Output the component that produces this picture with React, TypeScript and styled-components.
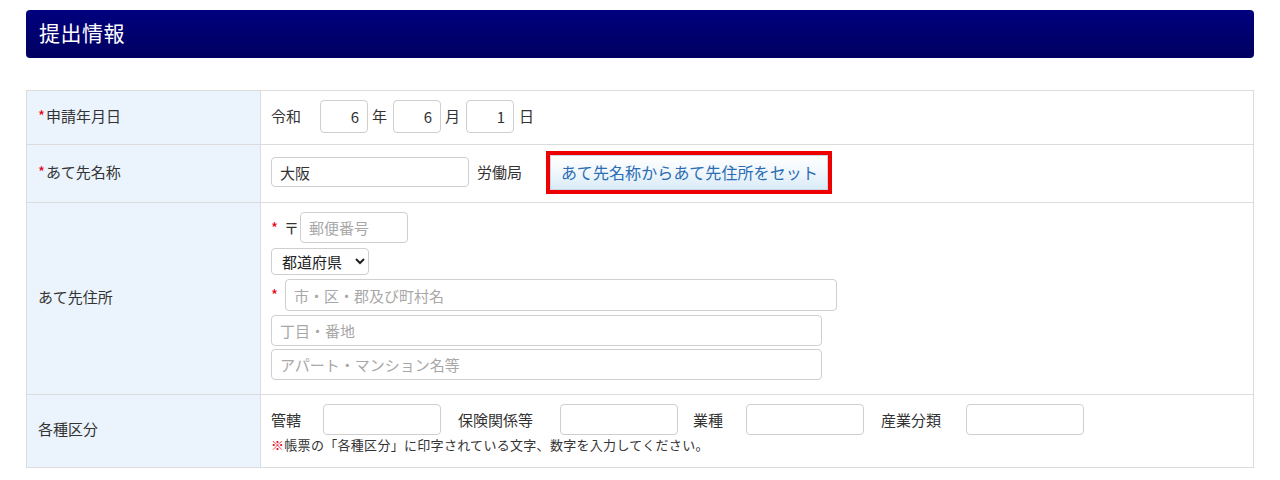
import React from "react";
import styled, { createGlobalStyle } from "styled-components";

const GlobalStyle = createGlobalStyle`
    body {
        margin: 0;
        background: #fff;
        font-family: "Noto Sans CJK JP", "Noto Sans", sans-serif;
        color: #333;
        line-height: 1.3;
    }
`;

const Page = styled.div`
    padding: 10px 26px 0;
`;

const Header = styled.div`
    height: 48px;
    border-radius: 4px;
    background: linear-gradient(to bottom, #00007e, #000060);
    display: flex;
    align-items: center;
    padding-left: 13px;
`;

const Title = styled.h2`
    margin: 0 0 2px;
    color: #fff;
    font-size: 21px;
    font-weight: 400;
    letter-spacing: 0.5px;
`;

const Table = styled.div`
    margin-top: 32px;
    display: grid;
    grid-template-columns: 234px 1fr;
    border: 1px solid #dcdcdc;
    border-bottom: none;
`;

const Label = styled.div<{ $h: number }>`
    height: ${p => p.$h}px;
    box-sizing: border-box;
    background: #ebf4fd;
    border-right: 1px solid #dcdcdc;
    border-bottom: 1px solid #dcdcdc;
    display: flex;
    align-items: center;
    padding: 0 0 4px 11px;
    font-size: 15px;
`;

const Cell = styled.div<{ $h: number; $top?: number }>`
    height: ${p => p.$h}px;
    box-sizing: border-box;
    border-bottom: 1px solid #dcdcdc;
    padding: ${p => (p.$top !== undefined ? `${p.$top}px 0 0 10px` : "0 0 3px 10px")};
    display: flex;
    flex-direction: column;
    justify-content: ${p => (p.$top !== undefined ? "flex-start" : "center")};
    font-size: 15px;
`;

const Row = styled.div<{ $gap?: number; $mt?: number }>`
    display: flex;
    align-items: center;
    gap: ${p => p.$gap ?? 4}px;
    margin-top: ${p => p.$mt ?? 0}px;
`;

const Req = styled.span`
    color: #e60012;
    margin-right: 1px;
`;

const Text = styled.span<{ $ml?: number; $mr?: number }>`
    margin-left: ${p => p.$ml ?? 0}px;
    margin-right: ${p => p.$mr ?? 0}px;
    white-space: nowrap;
`;

const Input = styled.input<{ $w: number; $h?: number; $right?: boolean }>`
    width: ${p => p.$w}px;
    height: ${p => p.$h ?? 31}px;
    box-sizing: border-box;
    border: 1px solid #cfcfcf;
    border-radius: 4px;
    padding: 0 8px;
    font-family: inherit;
    font-size: 15px;
    color: #333;
    text-align: ${p => (p.$right ? "right" : "left")};
    background: #fff;
    &::placeholder {
        color: #a8a8a8;
    }
`;

const Select = styled.select`
    width: 98px;
    height: 27px;
    box-sizing: border-box;
    border: 1px solid #cfcfcf;
    border-radius: 4px;
    font-family: inherit;
    font-size: 15px;
    color: #222;
    background: #fff;
    padding: 0 2px 0 6px;
`;

const RedFrame = styled.div`
    border: 4px solid #ee0000;
    margin-left: 16px;
    display: flex;
`;

const SetButton = styled.button`
    height: 35px;
    padding: 0 9px 0 10px;
    border: 1px solid #c9d6e2;
    background: linear-gradient(to bottom, #ffffff 0%, #f0f7fc 50%, #d9ebf7 100%);
    color: #2a6db5;
    font-family: inherit;
    font-size: 16px;
    letter-spacing: 0.1px;
    cursor: pointer;
`;

const Note = styled.div`
    font-size: 13px;
    letter-spacing: 0.3px;
    color: #333;
    margin-top: 2px;
`;

const NoteMark = styled.span`
    color: #e60012;
    font-weight: 700;
`;

export default function App() {
    return (
        <Page>
            <GlobalStyle />
            <Header>
                <Title>提出情報</Title>
            </Header>
            <Table>
                <Label $h={54}>
                    <Req>*</Req>申請年月日
                </Label>
                <Cell $h={54}>
                    <Row>
                        <Text $mr={15}>令和</Text>
                        <Input $w={48} $h={33} $right defaultValue="6" />
                        <Text $mr={2}>年</Text>
                        <Input $w={48} $h={33} $right defaultValue="6" />
                        <Text $mr={2}>月</Text>
                        <Input $w={48} $h={33} $right defaultValue="1" />
                        <Text $ml={1}>日</Text>
                    </Row>
                </Cell>

                <Label $h={58}>
                    <Req>*</Req>あて先名称
                </Label>
                <Cell $h={58}>
                    <Row $gap={8}>
                        <Input $w={198} $h={30} defaultValue="大阪" />
                        <Text>労働局</Text>
                        <RedFrame>
                            <SetButton>あて先名称からあて先住所をセット</SetButton>
                        </RedFrame>
                    </Row>
                </Cell>

                <Label $h={192}>あて先住所</Label>
                <Cell $h={192} $top={9}>
                    <Row $gap={0}>
                        <Req>*</Req>
                        <Text $ml={5} $mr={1}>〒</Text>
                        <Input $w={108} placeholder="郵便番号" />
                    </Row>
                    <Row $mt={5}>
                        <Select defaultValue="">
                            <option value="">都道府県</option>
                        </Select>
                    </Row>
                    <Row $gap={0} $mt={4}>
                        <Req>*</Req>
                        <Input $w={552} $h={32} placeholder="市・区・郡及び町村名" style={{ marginLeft: 6 }} />
                    </Row>
                    <Row $mt={4}>
                        <Input $w={551} $h={31} placeholder="丁目・番地" />
                    </Row>
                    <Row $mt={3}>
                        <Input $w={551} $h={31} placeholder="アパート・マンション名等" />
                    </Row>
                </Cell>

                <Label $h={73}>各種区分</Label>
                <Cell $h={73} $top={9}>
                    <Row $gap={0}>
                        <Text $mr={22}>管轄</Text>
                        <Input $w={118} $h={31} />
                        <Text $ml={17} $mr={27}>保険関係等</Text>
                        <Input $w={118} $h={31} />
                        <Text $ml={15} $mr={23}>業種</Text>
                        <Input $w={118} $h={31} />
                        <Text $ml={17} $mr={25}>産業分類</Text>
                        <Input $w={118} $h={31} />
                    </Row>
                    <Note>
                        <NoteMark>※</NoteMark>帳票の「各種区分」に印字されている文字、数字を入力してください。
                    </Note>
                </Cell>
            </Table>
        </Page>
    );
}
